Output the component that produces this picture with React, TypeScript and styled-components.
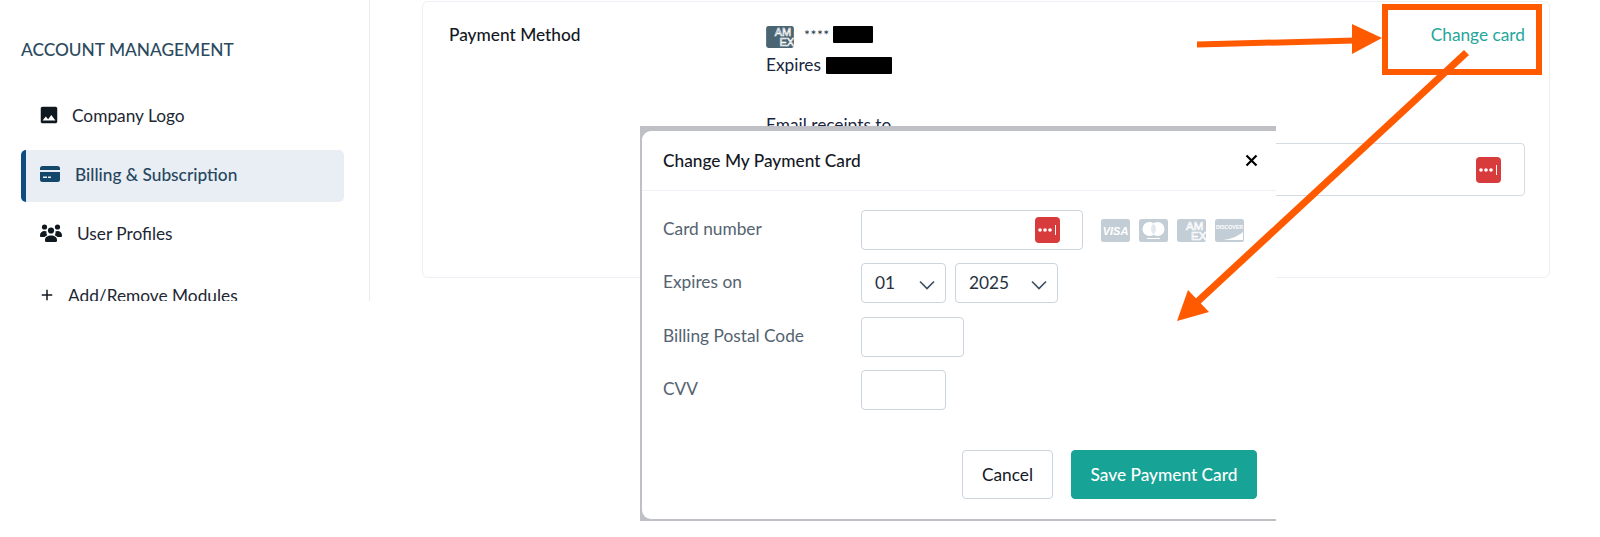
import React from "react";
import styled, { createGlobalStyle } from "styled-components";
import { MdImage, MdAdd } from "react-icons/md";

const GlobalStyle = createGlobalStyle`
  html, body {
    margin: 0;
    padding: 0;
    background: #fff;
    overflow: hidden;
  }
  * { box-sizing: border-box; }
  body {
    font-family: Lato, "Open Sans", sans-serif;
    font-size: 17.3px;
    color: #1d2733;
  }
`;

const Page = styled.div`
  position: relative;
  display: flex;
  align-items: flex-start;
  width: 1600px;
  height: 537px;
  overflow: hidden;
`;

const Sidebar = styled.aside`
  width: 370px;
  height: 301px;
  flex: none;
  overflow: hidden;
  padding: 39px 25px 0 21px;
  border-right: 1px solid #e8ebef;
`;

const SideHeading = styled.h2`
  margin: 0 0 29px;
  font-size: 17.3px;
  line-height: 21px;
  font-weight: 500;
  color: #2c4a5e;
`;

const NavList = styled.nav`
  display: flex;
  flex-direction: column;
  gap: 7px;
`;

const NavItem = styled.div<{ $active?: boolean; $drop?: number }>`
  display: flex;
  align-items: center;
  gap: 15px;
  height: 52px;
  margin-top: ${(p) => p.$drop ?? 0}px;
  margin-bottom: ${(p) => (p.$active ? -2 : 0)}px;
  padding-left: ${(p) => (p.$active ? "14px" : "19px")};
  padding-bottom: ${(p) => (p.$active ? "4px" : "0")};
  border-left: ${(p) => (p.$active ? "5px solid #0f4c81" : "none")};
  border-radius: 5px;
  background: ${(p) => (p.$active ? "#e9eef5" : "transparent")};
  color: ${(p) => (p.$active ? "#27465e" : "#1d2733")};
  font-weight: ${(p) => (p.$active ? 500 : 400)};
  svg { flex: none; }
`;

const Card = styled.section`
  display: grid;
  grid-template-columns: 317px 1fr;
  width: 1128px;
  height: 277px;
  margin: 1px 0 0 52px;
  padding: 24px 24px 0 26px;
  border: 1px solid #eceff3;
  border-radius: 6px;
`;

const FieldLabel = styled.div`
  font-weight: 500;
  line-height: 18px;
  color: #14181f;
`;

const ValueColumn = styled.div`
  display: flex;
  flex-direction: column;
  min-width: 0;
`;

const TopRow = styled.div`
  display: flex;
  align-items: flex-start;
  height: 22px;
`;

const StoredCard = styled.div`
  display: flex;
  align-items: flex-start;
  flex: 1;
`;

const Masked = styled.span`
  margin: 3px 0 0 10px;
  font-size: 14px;
  line-height: 12px;
  color: #26323f;
  letter-spacing: 0.5px;
`;

const Redaction = styled.span<{ $w: number; $h: number; $left: number }>`
  display: inline-block;
  flex: none;
  width: ${(p) => p.$w}px;
  height: ${(p) => p.$h}px;
  margin-left: ${(p) => p.$left}px;
  background: #000;
  border-radius: 1px;
`;

const ChangeLink = styled.a`
  line-height: 18px;
  color: #26a69a;
`;

const Line = styled.div<{ $top: number }>`
  display: flex;
  align-items: center;
  height: 24px;
  margin-top: ${(p) => p.$top}px;
  line-height: 24px;
  color: #1b2540;
`;

const PlainField = styled.div`
  display: flex;
  align-items: center;
  justify-content: flex-end;
  height: 53px;
  margin-top: 6px;
  padding-right: 23px;
  border: 1px solid #d5dbe2;
  border-radius: 4px;
`;

const Modal = styled.div`
  position: absolute;
  left: 640px;
  top: 126px;
  width: 636px;
  height: 395px;
  padding: 5px 0 2px 2px;
  background: #bfc0c6;
`;

const ModalInner = styled.div`
  display: flex;
  flex-direction: column;
  height: 100%;
  background: #fff;
  border-radius: 9px 0 0 9px;
`;

const ModalHeader = styled.header`
  display: flex;
  align-items: center;
  justify-content: space-between;
  height: 60px;
  flex: none;
  padding: 0 18px 1px 21px;
  border-bottom: 1px solid #eef1f6;
`;

const ModalTitle = styled.h3`
  margin: 0;
  font-size: 17.3px;
  font-weight: 500;
  color: #14181f;
`;

const ModalBody = styled.div`
  display: flex;
  flex-direction: column;
  gap: 13.33px;
  padding: 19px 19px 0 21px;
`;

const FormRow = styled.div`
  display: grid;
  grid-template-columns: 198px 1fr;
  align-items: center;
  min-height: 40px;
`;

const RowLabel = styled.label`
  color: #54636f;
  padding-bottom: 3px;
`;

const Controls = styled.div`
  display: flex;
  align-items: center;
  gap: 9px;
`;

const Box = styled.div<{ $w: number }>`
  display: flex;
  align-items: center;
  justify-content: space-between;
  width: ${(p) => p.$w}px;
  height: 40px;
  background: #fff;
  border: 1px solid #ccd4dd;
  border-radius: 4px;
  padding: 0 10px 2px 13px;
  color: #26323f;
`;

const CardBox = styled(Box)`
  padding: 0 22px 0 0;
  justify-content: flex-end;
`;

const LogoRow = styled.div`
  display: flex;
  gap: 9px;
  margin-left: 9px;
`;

const ModalFooter = styled.footer`
  display: flex;
  justify-content: flex-end;
  gap: 18px;
  margin-top: 40px;
  padding-right: 19px;
`;

const Button = styled.button<{ $primary?: boolean }>`
  height: 49px;
  padding: 0;
  width: ${(p) => (p.$primary ? "186px" : "91px")};
  border: 1px solid ${(p) => (p.$primary ? "#17a396" : "#ccd4dd")};
  border-radius: 4px;
  background: ${(p) => (p.$primary ? "#17a396" : "#fff")};
  color: ${(p) => (p.$primary ? "#fff" : "#14181f")};
  font: ${(p) => (p.$primary ? 500 : 400)} 17.3px Lato, sans-serif;
`;

const Callout = styled.div`
  position: absolute;
  left: 1382px;
  top: 4px;
  width: 160px;
  height: 71px;
  border: 6px solid #ff5a00;
`;

const ArrowLayer = styled.svg`
  position: absolute;
  left: 0;
  top: 0;
  pointer-events: none;
`;

const ChevronSvg = styled.svg`
  margin-top: 5px;
`;

const LastPass = () => (
  <svg width="25" height="26" viewBox="0 0 25 26">
    <rect width="25" height="26" rx="4" fill="#d83b3b" />
    <circle cx="5" cy="13" r="1.8" fill="#fff" />
    <circle cx="10" cy="13" r="1.8" fill="#fff" />
    <circle cx="15" cy="13" r="1.8" fill="#fff" />
    <rect x="20" y="8" width="1" height="10" fill="#fff" />
  </svg>
);

const CardIcon = () => (
  <svg width="20" height="16" viewBox="0 0 20 16">
    <path d="M2.5 0h15A2.5 2.5 0 0 1 20 2.5V4H0V2.5A2.5 2.5 0 0 1 2.5 0z" fill="#14486b" />
    <path d="M0 6h20v7.5a2.5 2.5 0 0 1-2.5 2.5h-15A2.5 2.5 0 0 1 0 13.5z" fill="#14486b" />
    <rect x="3" y="10.5" width="4" height="1.5" fill="#e9eef5" />
    <rect x="8" y="10.5" width="3" height="1.5" fill="#e9eef5" />
  </svg>
);

const UsersIcon = () => (
  <svg width="22" height="18" viewBox="0 0 22 18" fill="#10181f">
    <circle cx="4.5" cy="3" r="2.6" />
    <circle cx="17.5" cy="3" r="2.6" />
    <circle cx="11" cy="6.5" r="3.1" />
    <path d="M0 11.5C0 8.5 2 7 4.5 7c1 0 1.7.2 2.2.6c-.6 1.2-.2 2.6.6 3.6C5.6 12 5 12.6 4.6 13H1a1 1 0 0 1-1-1.500z" />
    <path d="M22 11.500C22 8.500 20 7 17.500 7c-1 0-1.700.2-2.200.6c.6 1.200.2 2.600-.6 3.600c1.700.8 2.300 1.400 2.700 1.800H21a1 1 0 0 0 1-1.500z" />
    <path d="M5 16c0-3 2.500-4.500 6-4.500s6 1.500 6 4.500v.8a1.200 1.200 0 0 1-1.200 1.200H6.200A1.200 1.200 0 0 1 5 16.800z" />
  </svg>
);

// amex tile is cut off on its right edge in the screenshot, text runs past the viewBox
const AmexLogo = ({ fill, w, h }: { fill: string; w: number; h: number }) => (
  <svg width={w} height={h} viewBox="0 0 29 23">
    <rect width="29" height="23" rx="2.5" fill={fill} />
    <text x="9" y="10.500" fontFamily="Liberation Sans" fontSize="11.500" fill="none" stroke="#fff" strokeWidth="0.7">AM</text>
    <text x="14" y="21" fontFamily="Liberation Sans" fontSize="11.500" fill="none" stroke="#fff" strokeWidth="0.7">EX</text>
  </svg>
);

const VisaLogo = () => (
  <svg width="29" height="23" viewBox="0 0 29 23">
    <rect width="29" height="23" rx="2.5" fill="#c3cdd6" />
    <text x="14.5" y="16" textAnchor="middle" fontFamily="Liberation Sans" fontStyle="italic" fontWeight="700" fontSize="11" fill="#fff">VISA</text>
  </svg>
);

const MasterLogo = () => (
  <svg width="29" height="23" viewBox="0 0 29 23">
    <rect width="29" height="23" rx="2.5" fill="#c3cdd6" />
    <circle cx="10.5" cy="10" r="7" fill="#fff" />
    <circle cx="18.5" cy="10" r="7" fill="#fff" />
    <path d="M14.5 4.6a7 7 0 0 1 0 10.8a7 7 0 0 1 0-10.8z" fill="#e3e8ec" />
    <rect x="8" y="19" width="13" height="1" fill="#fff" />
  </svg>
);

const DiscoverLogo = () => (
  <svg width="29" height="23" viewBox="0 0 29 23">
    <rect width="29" height="23" rx="2.5" fill="#c3cdd6" />
    <text x="14.5" y="10" textAnchor="middle" fontFamily="Liberation Sans" fontWeight="700" fontSize="5.2" fill="#fff">DISCOVER</text>
    <path d="M28 13v8H8c9-1 15-4 20-8z" fill="#fff" />
  </svg>
);

const Chevron = () => (
  <ChevronSvg width="16" height="10" viewBox="0 0 16 10" fill="none" stroke="#3a4e60" strokeWidth="1.6">
    <path d="M1 1.5L8 8.5L15 1.5" />
  </ChevronSvg>
);

const CloseIcon = () => (
  <svg width="13" height="13" viewBox="0 0 13 13" fill="none" stroke="#000" strokeWidth="2.2">
    <path d="M1.5 1.5L11.5 11.5M11.5 1.5L1.5 11.5" />
  </svg>
);

export default function App() {
  return (
    <Page>
      <GlobalStyle />
      <Sidebar>
        <SideHeading>ACCOUNT MANAGEMENT</SideHeading>
        <NavList>
          <NavItem>
            <MdImage size={22} color="#10181f" style={{ margin: "0 -3px 0 -2px" }} />
            Company Logo
          </NavItem>
          <NavItem $active $drop={2}>
            <CardIcon />
            Billing &amp; Subscription
          </NavItem>
          <NavItem>
            <UsersIcon />
            User Profiles
          </NavItem>
          <NavItem $drop={3}>
            <MdAdd size={18} color="#10181f" style={{ margin: "0 -3px 0 -2px" }} />
            Add/Remove Modules
          </NavItem>
        </NavList>
      </Sidebar>

      <Card>
        <FieldLabel>Payment Method</FieldLabel>
        <ValueColumn>
          <TopRow>
            <StoredCard>
              <AmexLogo fill="#4a6472" w={28} h={22} />
              <Masked>****</Masked>
              <Redaction $w={40} $h={17} $left={3} />
            </StoredCard>
            <ChangeLink>Change card</ChangeLink>
          </TopRow>
          <Line $top={5}>
            Expires
            <Redaction $w={66} $h={17} $left={5} />
          </Line>
          <Line $top={36}>Email receipts to</Line>
          <PlainField>
            <LastPass />
          </PlainField>
        </ValueColumn>
      </Card>

      <Modal>
        <ModalInner>
          <ModalHeader>
            <ModalTitle>Change My Payment Card</ModalTitle>
            <CloseIcon />
          </ModalHeader>
          <ModalBody>
            <FormRow>
              <RowLabel>Card number</RowLabel>
              <Controls>
                <CardBox $w={222}>
                  <LastPass />
                </CardBox>
                <LogoRow>
                  <VisaLogo />
                  <MasterLogo />
                  <AmexLogo fill="#c3cdd6" w={29} h={23} />
                  <DiscoverLogo />
                </LogoRow>
              </Controls>
            </FormRow>
            <FormRow>
              <RowLabel>Expires on</RowLabel>
              <Controls>
                <Box $w={85}>
                  01
                  <Chevron />
                </Box>
                <Box $w={103}>
                  2025
                  <Chevron />
                </Box>
              </Controls>
            </FormRow>
            <FormRow>
              <RowLabel>Billing Postal Code</RowLabel>
              <Controls>
                <Box $w={103} />
              </Controls>
            </FormRow>
            <FormRow>
              <RowLabel>CVV</RowLabel>
              <Controls>
                <Box $w={85} />
              </Controls>
            </FormRow>
          </ModalBody>
          <ModalFooter>
            <Button>Cancel</Button>
            <Button $primary>Save Payment Card</Button>
          </ModalFooter>
        </ModalInner>
      </Modal>

      <Callout />
      <ArrowLayer width="1600" height="537" viewBox="0 0 1600 537">
        <path d="M1197 41.5L1355 37.5V43.5L1197 47.5z" fill="#ff5a00" />
        <path d="M1352 24L1382 38L1352 54z" fill="#ff5a00" />
        <path d="M1464 50L1469 55L1198 306L1193 301z" fill="#ff5a00" />
        <path d="M1177 321L1188 290L1209 312z" fill="#ff5a00" />
      </ArrowLayer>
    </Page>
  );
}
